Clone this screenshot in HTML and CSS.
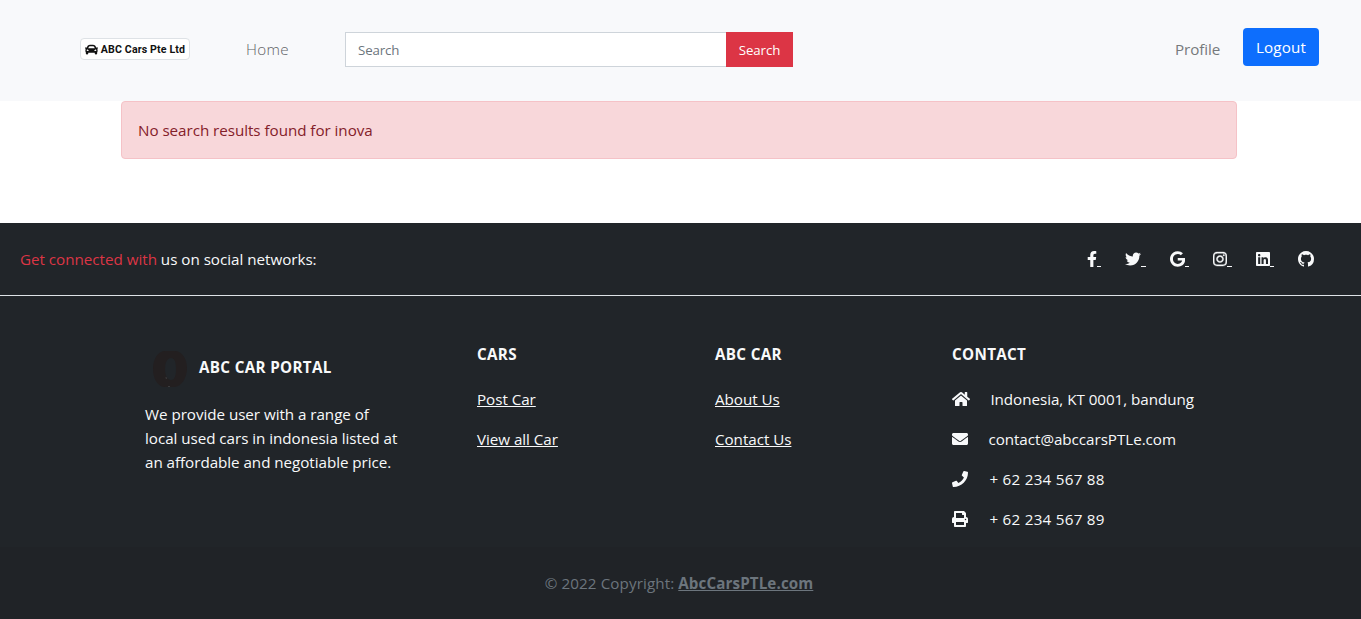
FILE: index.html
```html
<!DOCTYPE html>
<html lang="en">
<head>
<meta charset="utf-8">
<title>ABC Cars Pte Ltd</title>
<link rel="stylesheet" href="styles.css">
</head>
<body>
<header class="navbar">
  <a class="brand" href="#">
    <svg class="brand-icon" viewBox="0 0 512 512" preserveAspectRatio="none"><path d="M499.99 176h-59.87l-16.64-41.6C406.38 91.63 365.57 64 319.5 64h-127c-46.06 0-86.88 27.63-103.99 70.4L71.87 176H12.01C4.2 176-1.53 183.34.37 190.91l6 24C7.7 220.25 12.5 224 18.01 224h20.07C24.65 235.73 16 252.78 16 272v48c0 16.12 6.16 30.67 16 41.93V416c0 17.67 14.33 32 32 32h32c17.67 0 32-14.33 32-32v-32h256v32c0 17.67 14.33 32 32 32h32c17.67 0 32-14.33 32-32v-54.07c9.84-11.25 16-25.8 16-41.93v-48c0-19.22-8.65-36.27-22.07-48H494c5.51 0 10.31-3.75 11.64-9.09l6-24c1.89-7.57-3.84-14.91-11.65-14.91zm-352.06-17.83c7.29-18.22 24.94-30.17 44.57-30.17h127c19.63 0 37.28 11.95 44.57 30.17L384 208H128l19.93-49.83zM96 319.8c-19.2 0-32-12.76-32-31.9S76.8 256 96 256s48 28.71 48 47.85-28.8 15.95-48 15.95zm320 0c-19.2 0-48 3.19-48-15.95S396.8 256 416 256s32 12.76 32 31.9-12.8 31.9-32 31.9z"/></svg>
    <span>ABC Cars Pte Ltd</span>
  </a>
  <a class="nav-link home" href="#">Home</a>
  <form class="search">
    <input class="search-input" type="text" placeholder="Search">
    <button class="search-button" type="button">Search</button>
  </form>
  <a class="nav-link profile" href="#">Profile</a>
  <a class="logout" href="#">Logout</a>
</header>
<main>
  <div class="alert"><span>No search results found for inova</span></div>
</main>
<footer>
  <section class="social">
    <p class="social-text"><span class="accent">Get connected with</span> <span>us on social networks:</span></p>
    <nav class="social-links">
      <a href="#"><svg class="w-f" viewBox="0 0 320 512"><path d="M279.14 288l14.22-92.66h-88.91v-60.13c0-25.35 12.42-50.06 52.24-50.06h40.42V6.26S260.43 0 225.36 0c-73.22 0-121.08 44.38-121.08 124.72v70.62H22.89V288h81.39v224h100.17V288z"/></svg><i class="dash"></i></a>
      <a href="#"><svg class="w-16" viewBox="0 0 512 512"><path d="M459.37 151.716c.325 4.548.325 9.097.325 13.645 0 138.72-105.583 298.558-298.558 298.558-59.452 0-114.68-17.219-161.137-47.106 8.447.974 16.568 1.299 25.34 1.299 49.055 0 94.213-16.568 130.274-44.832-46.132-.975-84.792-31.188-98.112-72.772 6.498.974 12.995 1.624 19.818 1.624 9.421 0 18.843-1.3 27.614-3.573-48.081-9.747-84.143-51.98-84.143-102.985v-1.299c13.969 7.797 30.214 12.67 47.431 13.319-28.264-18.843-46.781-51.005-46.781-87.391 0-19.492 5.197-37.36 14.294-52.954 51.655 63.675 129.3 105.258 216.365 109.807-1.624-7.797-2.599-15.918-2.599-24.04 0-57.828 46.782-104.934 104.934-104.934 30.213 0 57.502 12.67 76.67 33.137 23.715-4.548 46.456-13.32 66.599-25.34-7.798 24.366-24.366 44.833-46.132 57.827 21.117-2.273 41.584-8.122 60.426-16.243-14.292 20.791-32.161 39.308-52.628 54.253z"/></svg><i class="dash"></i></a>
      <a href="#"><svg class="w-g" viewBox="0 0 488 512"><path d="M488 261.8C488 403.3 391.1 504 248 504 110.8 504 0 393.2 0 256S110.8 8 248 8c66.8 0 123 24.5 166.3 64.9l-67.5 64.9C258.5 52.6 94.3 116.6 94.3 256c0 86.5 69.1 156.6 153.7 156.6 98.2 0 135-70.4 140.8-106.9H248v-85.3h236.1c2.3 12.7 3.9 24.9 3.9 41.4z"/></svg><i class="dash"></i></a>
      <a href="#"><svg class="w-14 bold" viewBox="0 0 448 512"><path d="M224.1 141c-63.6 0-114.9 51.3-114.9 114.9s51.3 114.9 114.9 114.9S339 319.5 339 255.9 287.7 141 224.1 141zm0 189.6c-41.1 0-74.7-33.5-74.7-74.7s33.5-74.7 74.7-74.7 74.7 33.5 74.7 74.7-33.6 74.7-74.7 74.7zm146.4-194.3c0 14.9-12 26.8-26.8 26.8-14.9 0-26.8-12-26.8-26.8s12-26.8 26.8-26.8 26.8 12 26.8 26.8zm76.1 27.2c-1.7-35.9-9.9-67.7-36.2-93.9-26.2-26.2-58-34.4-93.9-36.2-37-2.1-147.9-2.1-184.9 0-35.8 1.7-67.6 9.9-93.9 36.1s-34.4 58-36.2 93.9c-2.1 37-2.1 147.9 0 184.9 1.7 35.9 9.9 67.7 36.2 93.9s58 34.4 93.9 36.2c37 2.1 147.9 2.1 184.9 0 35.9-1.7 67.7-9.9 93.9-36.2 26.2-26.2 34.4-58 36.2-93.9 2.1-37 2.1-147.8 0-184.8zM398.8 388c-7.8 19.6-22.9 34.7-42.6 42.6-29.5 11.7-99.5 9-132.1 9s-102.7 2.6-132.1-9c-19.6-7.8-34.7-22.9-42.6-42.6-11.7-29.5-9-99.5-9-132.1s-2.6-102.7 9-132.1c7.8-19.6 22.9-34.7 42.6-42.6 29.5-11.7 99.5-9 132.1-9s102.7-2.6 132.1 9c19.6 7.8 34.7 22.9 42.6 42.6 11.7 29.5 9 99.5 9 132.1s2.7 102.7-9 132.1z"/></svg><i class="dash"></i></a>
      <a href="#"><svg class="w-14" viewBox="0 0 448 512"><path d="M416 32H31.9C14.3 32 0 46.5 0 64.3v383.4C0 465.5 14.3 480 31.9 480H416c17.6 0 32-14.5 32-32.3V64.3c0-17.8-14.4-32.3-32-32.3zM135.4 416H69V202.2h66.5V416zm-33.2-243c-21.3 0-38.5-17.3-38.5-38.5S80.9 96 102.2 96c21.2 0 38.5 17.3 38.5 38.5 0 21.3-17.2 38.5-38.5 38.5zm282.1 243h-66.4V312c0-24.8-.5-56.7-34.5-56.7-34.6 0-39.9 27-39.9 54.9V416h-66.4V202.2h63.7v29.2h.9c8.9-16.8 30.6-34.5 62.9-34.5 67.2 0 79.7 44.3 79.7 101.9V416z"/></svg><i class="dash"></i></a>
      <a href="#"><svg class="w-16" viewBox="0 0 16 16"><path d="M8 0C3.58 0 0 3.58 0 8c0 3.54 2.29 6.53 5.47 7.59.4.07.55-.17.55-.38 0-.19-.01-.82-.01-1.49-2.01.37-2.53-.49-2.69-.94-.09-.23-.48-.94-.82-1.13-.28-.15-.68-.52-.01-.53.63-.01 1.08.58 1.23.82.72 1.21 1.87.87 2.33.66.07-.52.28-.87.51-1.07-1.78-.2-3.64-.89-3.64-3.95 0-.87.31-1.59.82-2.15-.08-.2-.36-1.02.08-2.12 0 0 .67-.21 2.2.82.64-.18 1.32-.27 2-.27s1.36.09 2 .27c1.53-1.04 2.2-.82 2.2-.82.44 1.1.16 1.92.08 2.12.51.56.82 1.27.82 2.15 0 3.07-1.87 3.75-3.65 3.95.29.25.54.73.54 1.48 0 1.07-.01 1.93-.01 2.2 0 .21.15.46.55.38A8.01 8.01 0 0 0 16 8c0-4.42-3.58-8-8-8z"/></svg></a>
    </nav>
  </section>
  <section class="columns">
    <div class="about">
      <div class="about-head">
        <svg class="tire" viewBox="0 0 36 38"><path fill-rule="evenodd" d="M13 1h10c7 0 12 8 12 17S30 37 22 37H13C6 37 1 29 1 19S6 1 13 1zM19 8c-4 0-6 5-6 11s2 11 6 11 5-5 5-11-1-11-5-11z"/><path class="glint" d="M14 27l.4 2M16 36.500h2"/></svg>
        <h6>ABC CAR PORTAL</h6>
      </div>
      <p class="about-text">We provide user with a range of<br>local used cars in indonesia listed at<br>an affordable and negotiable price.</p>
    </div>
    <div class="links">
      <h6>CARS</h6>
      <p><a href="#">Post Car</a></p>
      <p><a href="#">View all Car</a></p>
    </div>
    <div class="links">
      <h6>ABC CAR</h6>
      <p><a href="#">About Us</a></p>
      <p><a href="#">Contact Us</a></p>
    </div>
    <div class="contact">
      <h6>CONTACT</h6>
      <p><svg class="w-18" viewBox="0 0 576 512"><path d="M280.37 148.26L96 300.11V464a16 16 0 0 0 16 16l112.06-.29a16 16 0 0 0 15.92-16V368a16 16 0 0 1 16-16h64a16 16 0 0 1 16 16v95.640a16 16 0 0 0 16 16.050L464 480a16 16 0 0 0 16-16V300L295.670 148.260a12.190 12.190 0 0 0-15.300 0zM571.600 251.470L488 182.560V44.050a12 12 0 0 0-12-12h-56a12 12 0 0 0-12 12v72.610L318.470 43a48 48 0 0 0-61 0L4.340 251.470a12 12 0 0 0-1.600 16.900l25.500 31A12 12 0 0 0 45.150 301l235.220-193.740a12.190 12.190 0 0 1 15.300 0L530.900 301a12 12 0 0 0 16.900-1.600l25.500-31a12 12 0 0 0-1.700-16.930z"/></svg><span>Indonesia, KT 0001, bandung</span></p>
      <p><svg class="w-16" viewBox="0 0 512 512"><path d="M502.300 190.800c3.900-3.100 9.700-.2 9.700 4.700V400c0 26.500-21.500 48-48 48H48c-26.500 0-48-21.500-48-48V195.600c0-5 5.700-7.800 9.700-4.700 22.400 17.400 52.100 39.500 154.100 113.600 21.100 15.400 56.700 47.800 92.200 47.600 35.700.3 72-32.800 92.300-47.600 102-74.100 131.600-96.300 154-113.700zM256 320c23.200.4 56.600-29.200 73.400-41.400 132.700-96.300 142.800-104.700 173.400-128.700 5.800-4.500 9.200-11.500 9.200-18.900v-19c0-26.500-21.500-48-48-48H48c-26.500 0-48 21.500-48 48v19c0 7.400 3.400 14.300 9.200 18.900 30.600 23.900 40.700 32.400 173.400 128.700 16.800 12.200 50.200 41.800 73.400 41.400z"/></svg><span>contact@abccarsPTLe.com</span></p>
      <p><svg class="w-16" viewBox="0 0 512 512"><path d="M493.400 24.600l-104-24c-11.300-2.600-22.900 3.300-27.500 13.900l-48 112c-4.200 9.800-1.400 21.300 6.900 28l60.600 49.600c-36 76.700-98.900 140.500-177.200 177.200l-49.600-60.600c-6.800-8.300-18.200-11.100-28-6.900l-112 48C3.900 366.500-2 378.100.6 389.400l24 104C27.100 504.200 36.700 512 48 512c256.100 0 464-207.500 464-464 0-11.200-7.700-20.900-18.600-23.400z"/></svg><span class="phone">+ 62 234 567 88</span></p>
      <p><svg class="w-16" viewBox="0 0 512 512"><path d="M448 192V77.250c0-8.490-3.370-16.620-9.370-22.630L393.370 9.370c-6-6-14.140-9.370-22.630-9.370H96C78.330 0 64 14.330 64 32v160c-35.350 0-64 28.650-64 64v112c0 8.840 7.160 16 16 16h48v96c0 17.670 14.330 32 32 32h320c17.670 0 32-14.330 32-32v-96h48c8.840 0 16-7.160 16-16V256c0-35.350-28.650-64-64-64zm-64 256H128v-96h256v96zm0-224H128V64h192v48c0 8.840 7.160 16 16 16h48v96zm48 72c-13.250 0-24-10.750-24-24 0-13.260 10.750-24 24-24s24 10.740 24 24c0 13.250-10.750 24-24 24z"/></svg><span class="phone">+ 62 234 567 89</span></p>
    </div>
  </section>
  <section class="copyright"><span>© 2022 Copyright:</span><a href="#">AbcCarsPTLe.com</a></section>
</footer>
</body>
</html>
```
FILE: styles.css
```css
* { box-sizing: border-box; }
body {
  margin: 0;
  font: 15.2px/24px "Segoe UI", "Open Sans", "Noto Sans", sans-serif;
  color: #212529;
  background: #fff;
  letter-spacing: -0.04px;
}
p, h6 { margin: 0; }
a { color: inherit; }
svg { display: block; flex: none; fill: currentColor; height: 16px; }
span, a { white-space: nowrap; }

.navbar {
  display: flex;
  align-items: center;
  height: 101px;
  padding: 0 42px 3px 80px;
  background: #f8f9fb;
}
.navbar a { text-decoration: none; }
.brand {
  display: flex;
  align-items: center;
  justify-content: center;
  gap: 3px;
  width: 110px;
  height: 22px;
  background: #fff;
  border: 1px solid #dee2e6;
  border-radius: 4px;
  color: #111;
  font: bold 10.6px/21px Roboto, sans-serif;
  letter-spacing: 0.14px;
}
.brand-icon { width: 13px; height: 13px; }
.nav-link { color: #76797c; }
.home { margin-left: 56px; width: 43px; font-weight: 300; letter-spacing: 0.3px; color: #5f6265; }
.search { display: flex; margin: 1px 0 0 56px; width: 448px; height: 35px; }
.search-input {
  flex: 1;
  min-width: 0;
  padding: 0 12px;
  border: 1px solid #ced4da;
  border-right: 0;
  font: 13.3px "Open Sans", sans-serif;
  letter-spacing: -0.15px;
  background: #fff;
}
.search-input::placeholder { color: #6c757d; opacity: 1; }
.search-button {
  width: 67px;
  padding: 0;
  border: 0;
  background: #dc3545;
  color: #fff;
  font: 13.3px "Open Sans", sans-serif;
  letter-spacing: -0.1px;
}
.profile { margin-left: auto; width: 45px; letter-spacing: -0.1px; }
.logout {
  margin: 0 0 4px 23px;
  width: 76px;
  height: 38px;
  line-height: 38px;
  text-align: center;
  border-radius: 4px;
  background: #0d6efd;
  color: #fff;
  letter-spacing: 0.15px;
}

main { height: 122px; padding: 0 124px 0 121px; }
.alert {
  height: 58px;
  padding: 16px;
  border: 1px solid #f5c2c7;
  border-radius: 4px;
  background: #f8d7da;
  color: #842029;
}

footer { background: #212529; color: #f8f9fa; }
.social {
  display: flex;
  justify-content: space-between;
  align-items: center;
  height: 73px;
  padding: 0 47px 0 20px;
  border-bottom: 1px solid #dee2e6;
}
.social-text { letter-spacing: -0.02px; }
.accent { color: #dc3545; }
.social-links { display: flex; gap: 24px; }
.social-links a { display: flex; align-items: flex-end; text-decoration: none; }
.dash { width: 4.4px; height: 1px; background: currentColor; }
.bold { stroke: currentColor; stroke-width: 12; }
.w-f { width: 10px; }
.w-g { width: 15.25px; }
.w-14 { width: 14px; }
.w-16 { width: 16px; }
.w-18 { width: 18px; }

.columns {
  display: grid;
  grid-template-columns: 332px 238px 237px 1fr;
  height: 251px;
  padding: 48px 60px 0 145px;
}
h6 { font-size: 15.2px; line-height: 20px; font-weight: 700; letter-spacing: 0.34px; }
.links h6, .contact h6 { margin-bottom: 23px; }
.links p, .contact p { margin-bottom: 16px; }
.contact p { display: flex; align-items: center; gap: 20.4px; }
.phone { padding-left: 1px; letter-spacing: 0.27px; }
.about-head { display: flex; align-items: center; height: 46px; gap: 11px; padding-left: 7px; margin-bottom: 12px; }
.tire { width: 36px; height: 38px; margin-top: 4px; color: #231f20; }
.glint { stroke: #55585a; stroke-width: 0.5; fill: none; }

.copyright {
  display: flex;
  justify-content: center;
  align-items: center;
  gap: 4px;
  height: 72px;
  padding-right: 3px;
  background: #202327;
  color: #6c757d;
  letter-spacing: 0.1px;
}
.copyright a { font-weight: 700; }
```
